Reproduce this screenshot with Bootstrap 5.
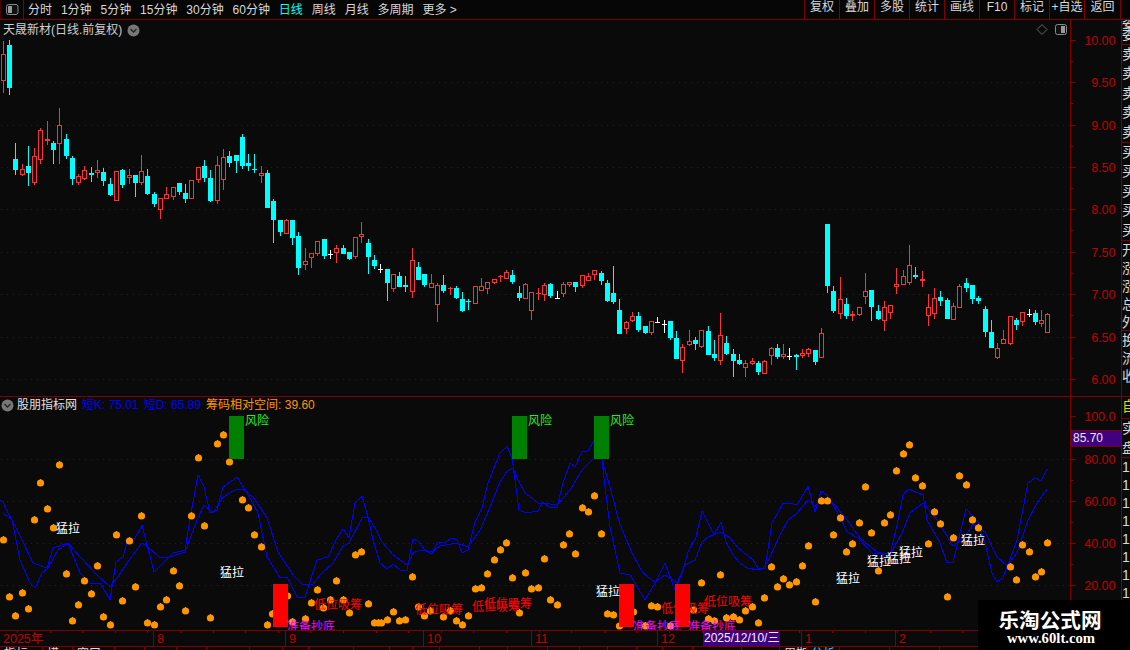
<!DOCTYPE html>
<html lang="zh">
<head>
<meta charset="utf-8">
<title>天晟新材</title>
<link href="https://cdn.jsdelivr.net/npm/bootstrap@5.3.0/dist/css/bootstrap.min.css" rel="stylesheet">
<style>
html,body{margin:0;background:#0a0a0a;overflow:hidden}
body,svg text{font-family:"Liberation Sans","Noto Sans CJK SC",sans-serif}
.term{width:1130px;height:650px;overflow:hidden;background:#0a0a0a;color:#d8d8d8;font-size:12px;line-height:14px}
.bar{height:20px;border-bottom:1px solid #800000;padding-right:9px;background:#060606}
.bar-toggle{width:24px;border-right:1px solid #800000;border-left:1px solid #500000}
.bar-menu{gap:8.9px;padding-left:4px}
.bar-menu .on{color:#00ffff}
.bar-btn{width:35px;border-left:1px solid #800000;text-align:center}
.bar-btn:last-child{border-right:1px solid #800000;width:37px}
.pane-price{height:377px;border-bottom:1px solid #800000}
.pane-ind{height:233px}
.plot{width:1070px;height:100%;flex:none}
.plot>svg,.scale>svg{display:block;width:100%;height:100%}
.scale{width:52px;flex:none;border-left:1px solid #800000;border-right:1px solid #800000;height:100%;position:relative}
.strip{width:8px;flex:none;overflow:hidden;font-size:14px;color:#d8d8d8;white-space:nowrap}
.cell{height:19.6px;line-height:19px}
.cell.short{height:5px;line-height:5px;border-bottom:1px solid #800000}
.cell.cut{border-bottom:1px solid #800000}
.cell.row18{height:18px;line-height:18px}
.cell.gold{height:22px;color:#e6d200;border-bottom:1px solid #800000}
.title-line{position:absolute;left:3px;top:3px;color:#cfcfcf;white-space:nowrap;display:flex;align-items:center;gap:5px}
.legend-line{position:absolute;left:1px;top:1px;height:14px;white-space:nowrap;display:flex;align-items:center}
.k-blue{color:#0000ff;margin-left:5px}
.k-orange{color:#ff9600;margin-left:5px}
.k-white{color:#e0e0e0;margin-left:3px}
.cur-val{position:absolute;left:0;top:33px;width:100%;height:17px;background:#400080;color:#e8e8e8;border-top:1px solid #800000;border-bottom:1px solid #800000;padding-left:2px;line-height:15px;font-size:12px}
.time{height:17px;border-top:1px solid #800000;border-bottom:1px solid #800000;position:relative;color:#c00000}
.time>svg{display:block;width:100%;height:100%}
.date-box{position:absolute;left:703px;top:0;width:77px;height:15px;background:#400080;color:#f0f0f0;line-height:14px;padding-left:1px;white-space:nowrap}
.tabs{height:3px;overflow:hidden;white-space:nowrap}
.tab{height:14px;line-height:14px;border-right:1px solid #800000;padding-left:4px;overflow:hidden;color:#ddd;flex:none}
.tab.cy{color:#00e5ff}
.mark-box{position:absolute;left:978px;top:600px;width:152px;height:50px;background:#000;color:#fff;text-align:center}
.mark-cn{font-size:20.6px;font-weight:700;line-height:22px;margin-top:8px;font-family:"Noto Sans CJK SC",sans-serif;padding-right:8px}
.mark-en{font-family:"Liberation Serif",serif;font-weight:700;font-size:14.7px;line-height:17px;padding-right:6px}
</style>
</head>
<body>
<div class="term position-relative">
  <div class="bar d-flex align-items-stretch">
    <div class="bar-toggle d-flex align-items-center justify-content-center">
      <svg width="14" height="13" viewBox="0 0 14 13"><rect x="1.5" y="1.5" width="11.5" height="10" rx="2" fill="#111" stroke="#8a8a8a"/><rect x="3" y="3" width="4" height="7" fill="#9a9a9a"/></svg>
    </div>
    <div class="bar-menu d-flex align-items-center">
      <span>分时</span><span>1分钟</span><span>5分钟</span><span>15分钟</span><span>30分钟</span><span>60分钟</span><span class="on">日线</span><span>周线</span><span>月线</span><span>多周期</span><span>更多 &gt;</span>
    </div>
    <div class="d-flex ms-auto">
      <div class="bar-btn">复权</div><div class="bar-btn">叠加</div><div class="bar-btn">多股</div><div class="bar-btn">统计</div><div class="bar-btn">画线</div><div class="bar-btn">F10</div><div class="bar-btn">标记</div><div class="bar-btn">+自选</div><div class="bar-btn">返回</div>
    </div>
  </div>

  <div class="pane-price d-flex">
    <div class="plot position-relative">
      <svg id="pricePlot" viewBox="0 20 1070 376" shape-rendering="crispEdges"></svg>
      <div class="title-line"><span>天晟新材(日线.前复权)</span>
        <svg width="13" height="13" viewBox="0 0 13 13"><circle cx="6.5" cy="6.5" r="6" fill="#777"/><path d="M3.5 5 6.5 8 9.5 5" fill="none" stroke="#222" stroke-width="1.3"/></svg>
      </div>
    </div>
    <div class="scale"><svg id="priceScale" viewBox="0 20 50 376" shape-rendering="crispEdges"></svg></div>
    <div class="strip">
      <div class="cell short">委</div><div class="cell cut">委</div>
      <div class="cell">卖</div><div class="cell">卖</div><div class="cell">卖</div><div class="cell">卖</div><div class="cell cut">卖</div>
      <div class="cell">买</div><div class="cell">买</div><div class="cell">买</div><div class="cell">买</div><div class="cell cut">买</div>
      <div class="cell row18">开</div><div class="cell row18">涨</div><div class="cell row18">涨</div><div class="cell row18">总</div><div class="cell row18 cut">外</div>
      <div class="cell row18">换</div><div class="cell row18">流</div><div class="cell row18">收</div>
    </div>
  </div>

  <div class="pane-ind d-flex">
    <div class="plot position-relative">
      <svg id="indPlot" viewBox="0 397 1070 233" shape-rendering="crispEdges"></svg>
      <div class="legend-line">
        <svg width="13" height="13" viewBox="0 0 13 13"><circle cx="6.5" cy="6.5" r="6" fill="#777"/><path d="M3.5 5 6.5 8 9.5 5" fill="none" stroke="#222" stroke-width="1.3"/></svg>
        <span class="k-white">股朋指标网</span><span class="k-blue">短K: 75.01</span><span class="k-blue">短D: 65.89</span><span class="k-orange">筹码相对空间: 39.60</span>
      </div>
    </div>
    <div class="scale">
      <svg id="indScale" viewBox="0 397 50 233" shape-rendering="crispEdges"></svg>
      <div class="cur-val">85.70</div>
    </div>
    <div class="strip">
      <div class="cell gold">自</div>
      <div class="cell">实</div><div class="cell cut">盘</div>
      <div class="cell row18">1</div><div class="cell row18">1</div><div class="cell row18">1</div><div class="cell row18">1</div><div class="cell row18">1</div><div class="cell row18">1</div><div class="cell row18">1</div><div class="cell row18">1</div>
    </div>
  </div>

  <div class="time">
    <svg id="timeScale" viewBox="0 0 1130 15" shape-rendering="crispEdges"></svg>
    <div class="date-box">2025/12/10/三</div>
  </div>
  <div class="tabs d-flex" id="tabs"></div>

  <div class="mark-box">
    <div class="mark-cn">乐淘公式网</div>
    <div class="mark-en">www.60lt.com</div>
  </div>
</div>

<script>
// [zoomX, type, wickTop, bodyTop, bodyBottom, wickBottom]  r red, c cyan, w white
var segs=[
 {ox:0,oy:0,d:[[10,'r',123,162,242,278],[28,'c',120,135,264,285]]},
 {ox:0,oy:100,d:[[46,'c',129,177,210,225],[67,'r',193,207,225,228],[85,'c',138,198,219,258],[103,'r',144,168,249,255],[121,'r',84,90,180,192],[142,'r',63,118,122,135],[160,'c',123,129,150,192],[178,'r',24,75,132,192],[199,'c',102,117,168,177],[217,'c',168,174,237,255],[235,'r',222,228,249,255],[253,'r',198,210,237,240],[274,'c',201,219,225,246],[292,'r',180,210,219,234],[310,'c',204,216,243,258],[331,'c',234,252,285,288],[349,'r',213,213,303,303],[367,'c',207,210,255,264],[388,'r',207,225,234,252],[406,'c',225,225,249,291],[424,'r',165,213,249,255],[442,'c',207,228,282,285],[463,'c',276,282,312,321],[481,'r',294,294,330,357],[499,'r',261,282,297,297],[520,'r',261,261,291,300],[538,'c',249,249,276,285],[556,'c',252,279,297,309],[574,'r',240,240,297,297],[595,'r',201,201,240,249],[613,'c',180,198,234,246],[631,'c',210,234,303,306],[652,'r',168,195,303,312],[670,'r',147,171,240,270],[688,'c',153,168,189,201],[709,'c',165,165,183,219],[727,'c',102,111,198,207],[745,'c',162,189,198,213],[763,'c',162,207,210,219],[784,'r',198,219,228,249],[802,'c',210,219,324,324],[820,'c',297,303,360,429],[841,'c',360,360,396,408],[859,'r',357,360,402,402],[877,'c',360,360,414,435],[895,'c',396,408,504,525],[916,'r',444,483,495,510],[934,'r',459,459,474,504],[952,'r',423,423,462,468],[973,'c',417,417,468,477],[991,'w',450,462,465,477],[1009,'r',435,444,459,489],[1030,'c',435,444,462,462],[1048,'c',456,456,477,480]]},
 {ox:350,oy:220,d:[[16,'r',51,51,111,117],[34,'r',6,42,51,69],[55,'c',57,69,111,162],[73,'c',105,120,138,147],[91,'w',132,147,150,159],[112,'c',147,147,189,243],[130,'r',162,162,207,216],[148,'c',156,168,201,201],[166,'c',168,195,201,216],[187,'r',84,120,216,234],[205,'c',126,141,180,180],[223,'c',162,162,195,201],[244,'r',162,190,204,204],[262,'r',189,195,255,306],[280,'c',165,195,213,219],[301,'r',201,204,208,225],[319,'c',198,204,234,237],[337,'c',216,237,273,276],[355,'c',237,243,247,270],[376,'r',198,198,252,252],[394,'r',174,198,213,213],[412,'r',186,186,207,222],[433,'r',177,177,189,192],[451,'r',165,168,171,186],[469,'r',150,156,177,177],[487,'c',150,165,186,192],[508,'c',198,219,234,243],[526,'r',189,192,237,237],[544,'r',216,216,273,300],[565,'r',204,219,222,240],[583,'r',189,195,225,243],[601,'c',189,192,228,234],[622,'w',213,234,237,237],[640,'r',186,192,222,231],[658,'r',186,186,195,201],[676,'c',186,186,201,216],[697,'r',165,165,198,204],[715,'r',159,168,183,183],[733,'r',150,150,165,180],[754,'c',153,159,183,195],[772,'c',180,189,243,246],[790,'c',138,219,246,252],[808,'c',237,270,342,342],[829,'r',303,306,327,342],[847,'r',276,288,303,306],[865,'c',276,288,330,336],[886,'c',318,318,339,342],[904,'r',303,303,339,345],[922,'w',291,306,309,309],[943,'w',300,312,315,339],[961,'c',303,303,354,360],[979,'c',333,354,417,417],[997,'r',372,381,423,459],[1018,'r',330,363,375,378],[1036,'c',351,360,372,390]]},
 {ox:700,oy:220,d:[[4,'r',330,330,381,384],[25,'c',318,333,405,405],[43,'c',360,402,414,423],[61,'r',279,345,423,435],[79,'c',348,369,402,405],[100,'c',387,402,423,471],[118,'c',402,420,432,435],[136,'r',420,429,444,471],[157,'r',414,423,432,435],[175,'c',423,429,456,465],[193,'r',420,423,462,462],[214,'r',381,384,408,435],[232,'c',372,384,411,417],[250,'r',372,402,411,417],[268,'w',384,408,411,420],[289,'c',402,405,411,450],[307,'r',387,399,408,414],[325,'r',384,387,402,411],[346,'c',390,390,426,435],[364,'r',324,339,414,414],[382,'c',12,12,198,219],[400,'c',198,213,273,279],[421,'r',171,237,282,297],[439,'c',234,252,288,297],[457,'r',273,282,288,303],[478,'r',261,261,285,288],[496,'r',159,213,231,252],[514,'c',210,210,261,303],[535,'c',255,273,297,300],[553,'r',243,261,303,333],[571,'r',255,255,279,297],[589,'r',144,192,201,222],[610,'r',150,168,195,195],[628,'r',75,135,189,195],[646,'c',141,165,171,177],[667,'r',153,177,183,201],[685,'r',222,261,288,318],[703,'r',204,234,282,297],[721,'c',213,231,243,258],[742,'c',234,240,297,297],[760,'r',249,258,300,300],[778,'r',192,198,264,264],[799,'c',174,189,204,216],[817,'c',195,195,237,252],[835,'c',228,234,243,252],[856,'c',258,267,336,351],[874,'c',300,336,384,384],[892,'r',369,384,414,417],[910,'r',330,357,372,372],[931,'r',288,288,372,375],[949,'c',294,300,315,330],[967,'r',276,276,306,318],[988,'w',267,282,285,291],[1006,'c',270,279,306,315],[1024,'r',270,300,312,321],[1042,'r',279,282,339,339]]}
];
var BG='#0a0a0a',RED='#ff3232',CY='#00ffff',GRID='#6e0000',AX='#800000',LBL='#c00000';
var s='';
[82,124.5,167,209,251.5,294,336.5,378.5].forEach(function(y){
  y=Math.round(y);
  s+='<line x1="1" x2="1070" y1="'+(y+.5)+'" y2="'+(y+.5)+'" stroke="'+GRID+'" stroke-dasharray="1 5"/>';
});
segs.forEach(function(g){g.d.forEach(function(c){
  var px=Math.floor(c[0]/3+g.ox),o=function(v){return Math.round(v/3+g.oy)},
      wt=o(c[2]),bt=o(c[3]),bb=o(c[4]),wb=o(c[5]),t=c[1],col=t=='r'?RED:t=='c'?CY:'#ffffff';
  if(wb>wt)s+='<rect x="'+px+'" y="'+wt+'" width="1" height="'+(wb-wt)+'" fill="'+col+'"/>';
  if(t=='r'&&bb-bt>1){
    s+='<rect x="'+(px-1.5)+'" y="'+(bt+.5)+'" width="4" height="'+(bb-bt-1)+'" fill="'+BG+'" stroke="'+col+'"/>';
  }else{
    s+='<rect x="'+(px-2)+'" y="'+bt+'" width="5" height="'+Math.max(1,bb-bt)+'" fill="'+col+'"/>';
  }
})});
// top right markers of the price plot
s+='<g shape-rendering="auto"><path d="M1042 24.5 1047 29.5 1042 34.5 1037 29.5Z" fill="none" stroke="#666"/>'+
 '<rect x="1055.5" y="24.5" width="11" height="10" rx="2" fill="#111" stroke="#8a8a8a"/><rect x="1061" y="26" width="4" height="7" fill="#9a9a9a"/></g>';
document.getElementById('pricePlot').innerHTML=s;

function scale(id,vals,minor){
  var h='';
  vals.forEach(function(v){
    var y=Math.round(v[0]);
    h+='<rect x="0" y="'+y+'" width="5" height="1" fill="'+AX+'"/>';
    h+='<text x="44.5" y="'+(y+4.5)+'" text-anchor="end" font-size="12.5" fill="'+LBL+'" shape-rendering="auto">'+v[1]+'</text>';
  });
  minor.forEach(function(y){h+='<rect x="0" y="'+Math.round(y)+'" width="2" height="1" fill="'+AX+'"/>'});
  document.getElementById(id).innerHTML=h;
}
scale('priceScale',[[39.5,'10.00'],[82,'9.50'],[124.5,'9.00'],[167,'8.50'],[209,'8.00'],[251.5,'7.50'],[294,'7.00'],[336.5,'6.50'],[378.5,'6.00']],
      [61,103,146,188,230,273,315,358]);
scale('indScale',[[416,'100.0'],[458.5,'80.00'],[500.5,'60.00'],[542.5,'40.00'],[584.5,'20.00']],[437,480,522,564,606]);

// indicator
var fast=[[0,500],[3,502],[8,513],[12,520],[22,540],[33,563],[47,568],[53,548],[68,543],[80,573],[90,583],[100,583],[110,600],[116,562],[123,557],[128,538],[135,538],[142,525],[154,572],[163,563],[173,553],[185,550],[191,513],[198,475],[204,487],[210,513],[217,510],[223,487],[237,477],[247,493],[258,513],[267,557],[280,578],[287,577],[297,597],[305,597],[317,560],[328,557],[337,538],[343,529],[349,538],[355,503],[362,496],[368,517],[373,540],[380,563],[387,569],[393,564],[400,570],[407,570],[413,539],[418,541],[425,550],[432,554],[437,543],[445,542],[452,538],[457,540],[462,553],[468,550],[475,522],[482,508],[488,483],[495,465],[500,453],[507,446],[512,458],[515,480],[519,510],[526,513],[538,511],[543,502],[550,508],[557,507],[563,483],[570,463],[575,467],[582,452],[588,451],[594,440],[600,446],[602,460],[605,487],[610,527],[620,573],[630,575],[645,600],[655,583],[665,563],[675,590],[683,570],[688,552],[696,537],[702,511],[714,535],[721,522],[726,542],[733,555],[740,563],[747,568],[758,570],[765,568],[772,523],[783,503],[790,503],[797,505],[808,486],[815,512],[821,491],[827,495],[840,517],[847,532],[858,538],[872,553],[890,555],[897,525],[903,495],[908,489],[923,495],[927,520],[940,543],[947,563],[953,562],[966,509],[978,522],[985,543],[992,573],[997,582],[1003,578],[1017,540],[1028,483],[1035,478],[1041,481],[1047,469]];
var slow=[[3,513],[12,520],[20,560],[30,583],[35,588],[42,573],[48,568],[58,550],[68,543],[80,557],[97,575],[110,587],[117,578],[127,563],[142,543],[148,547],[160,558],[170,557],[185,552],[197,520],[204,505],[213,513],[223,497],[235,490],[242,489],[253,497],[267,518],[278,552],[293,575],[302,584],[312,585],[320,575],[333,563],[343,546],[349,543],[362,518],[368,517],[375,528],[382,542],[393,555],[407,565],[413,553],[420,550],[432,552],[440,546],[457,543],[468,547],[480,530],[490,507],[500,482],[507,471],[513,468],[517,478],[525,493],[538,503],[543,503],[557,505],[570,490],[582,470],[594,458],[600,445],[602,460],[610,487],[620,525],[633,555],[643,573],[655,582],[665,575],[677,583],[685,565],[695,560],[702,542],[708,537],[721,532],[730,538],[738,548],[753,560],[758,568],[763,569],[770,557],[780,535],[788,520],[797,513],[808,500],[815,507],[820,500],[833,503],[847,520],[860,538],[877,552],[890,555],[902,533],[910,513],[923,503],[937,520],[953,546],[963,540],[973,524],[985,532],[997,557],[1007,566],[1017,553],[1028,520],[1037,503],[1047,489]];
var dots=[[223,434.7],[217,443.7],[198,458],[229,461.7],[59,464.7],[40,482.7],[47,508.7],[34,519.7],[141,515.7],[191,515.7],[242,499.7],[248,507.7],[53,527.7],[3,539.7],[116,534.7],[129,540.7],[204,525.7],[254,534.7],[261,546.7],[355,554.7],[361,551.7],[97,565.7],[66,573.7],[173,570.7],[84,580.7],[336,580.7],[135,586.7],[179,585.7],[317,589.7],[22,592.7],[9,596.7],[91,593.7],[122,600.7],[166,599.7],[311,602.7],[78,604.7],[160,606.7],[28,608.7],[185,610.7],[368,603.7],[349,612.7],[330,599.7],[343,600],[323,608],[15,615.7],[103,616.7],[210,617.7],[72,620.7],[110,624.7],[147,622.7],[154,624.7],[267,624.7],[272,613.7],[287,595.7],[374,622.7],[378,622.7],[292,621.7],[305,619.3],[569,533.7],[601,533.7],[506,542.7],[563,544.7],[500,549.7],[575,553.7],[494,559.7],[544,558.7],[487,573.7],[512,577.7],[525,572.7],[412,576.7],[475,588.7],[481,587.7],[531,588.7],[538,587.7],[550,599.7],[557,604.7],[393,611.7],[387,619.7],[381,622.7],[399,620.7],[405,619.7],[456,620.7],[462,624.7],[468,615.7],[424,615.7],[418,606.7],[430,610.7],[443,616.7],[450,610.7],[519,612.7],[607,613.7],[613,614.7],[619,625.7],[633,611.7],[645,625.7],[651,605.7],[657,606.7],[670,625.7],[693,609.7],[701,582.7],[720,574.7],[764,597.7],[752,606.7],[745,610.7],[726,617.7],[733,616.7],[739,619.7],[758,622.7],[777,586.7],[771,566.7],[708,618.7],[714,620.7],[594,496],[582,508],[588,512],[909,444.7],[903,453.7],[896,470.7],[915,477.7],[922,485.7],[865,486.7],[959,475.7],[966,484.7],[821,500.7],[827,500.7],[934,511.7],[890,514.7],[840,517.7],[884,522.7],[859,522.7],[940,523.7],[972,519.7],[978,527.7],[833,534.7],[871,532.7],[953,537.7],[852,543.7],[808,545.7],[928,543.7],[1022,544.7],[1047,542.7],[846,551.7],[1029,551.7],[802,565.7],[1010,566.7],[878,570.7],[1041,571.7],[1035,576.7],[1016,579.7],[783,578.7],[796,581.7],[789,584.7],[815,601.7],[947,596.7]];
var h='';
[458.5,500.5,542.5,584.5].forEach(function(y){
  y=Math.round(y);
  h+='<line x1="1" x2="1070" y1="'+(y+.5)+'" y2="'+(y+.5)+'" stroke="'+GRID+'" stroke-dasharray="1 5"/>';
});
function pl(a){return '<polyline fill="none" stroke="#0000ff" stroke-width="1" points="'+a.map(function(p){return p.join(',')}).join(' ')+'"/>'}
h+=pl(fast)+pl(slow);
dots.forEach(function(d){
  h+='<circle cx="'+d[0]+'.5" cy="'+Math.round(d[1])+'" r="3.6" fill="#ff9600" shape-rendering="auto"/><rect x="'+d[0]+'" y="'+(Math.round(d[1])-4)+'" width="1" height="1" fill="#ff9600"/>';
});
[229,512,594].forEach(function(x){
  h+='<rect x="'+x+'" y="416" width="15" height="43" fill="#008000"/>';
  h+='<text x="'+(x+16)+'" y="425" font-size="12" fill="#22ee22" shape-rendering="auto">风险</text>';
});
[273,619,675].forEach(function(x){h+='<rect x="'+x+'" y="584" width="15" height="43" fill="#ff0000"/>'});
[[68,528],[232,572],[608,591],[848,578],[879,561],[899,558],[911,552],[973,540]].forEach(function(t){
  h+='<text x="'+t[0]+'" y="'+(t[1]+5)+'" text-anchor="middle" font-size="12" fill="#ffffff" shape-rendering="auto">猛拉</text>';
});
[[338,604],[439,609],[496,606],[508,603],[685,608],[728,601]].forEach(function(t){
  h+='<text x="'+t[0]+'" y="'+(t[1]+5)+'" text-anchor="middle" font-size="12" fill="#ff0000" shape-rendering="auto">低位吸筹</text>';
});
[[311,626],[657,626],[712,626]].forEach(function(t){
  h+='<text x="'+t[0]+'" y="'+(t[1]+5)+'" text-anchor="middle" font-size="12" fill="#ff00ff" shape-rendering="auto">准备抄底</text>';
});
document.getElementById('indPlot').innerHTML=h;

// time axis
var t='';
[[3,'2025年',0],[153,'8',1],[285,'9',1],[423,'10',1],[531,'11',1],[657,'12',1],[801,'1',1],[895,'2',1]].forEach(function(m){
  if(m[2])t+='<rect x="'+m[0]+'" y="0" width="1" height="15" fill="#800000"/>';
  t+='<text x="'+(m[0]+(m[2]?4:0))+'" y="12" font-size="12.5" fill="#c00000" shape-rendering="auto">'+m[1]+'</text>';
});
for(var x=17;x<1130;x+=32.6){t+='<rect x="'+Math.round(x)+'" y="0" width="1" height="2" fill="#800000"/>'}
document.getElementById('timeScale').innerHTML=t;

// clipped status tabs
var stops=[43,73,115,145,177,207,250,283,309,354,390,413,440,480,508,548,580,608,637,663,693,742,780,807,840,890,940,1000,1060],labels={0:'指标',1:'模',2:'窗口',23:'周期',24:'分析'},prev=0,tb='';
stops.forEach(function(x,i){
  tb+='<div class="tab'+(i==24?' cy':'')+'" style="width:'+(x-prev)+'px">'+(labels[i]||'')+'</div>';
  prev=x;
});
document.getElementById('tabs').innerHTML=tb;
</script>
<script src="https://cdn.jsdelivr.net/npm/bootstrap@5.3.0/dist/js/bootstrap.bundle.min.js"></script>
</body>
</html>
